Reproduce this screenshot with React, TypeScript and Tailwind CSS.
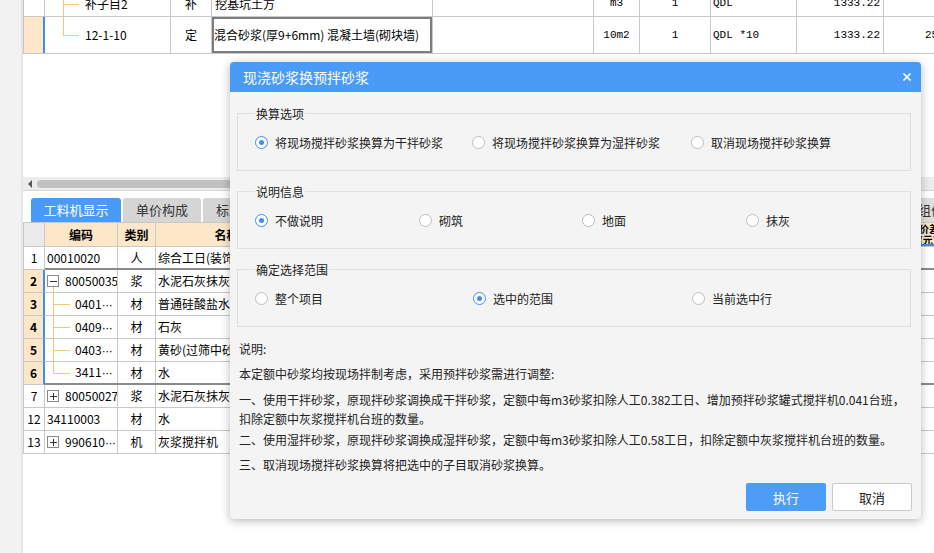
import { X } from "lucide-react";
import { FC } from "react";

const TopTable: FC = () => {
  return (
    <div className="h-[54px] overflow-hidden border-l border-[#c4c4c4]">
      <div className="-mt-[9px]">
        {/* partial row above */}
        <div className="flex h-[26px] border-b border-[#c8c8c8]">
          <div className="w-[21px] shrink-0 border-r border-[#c8c8c8]" />
          <div className="relative flex w-[126px] shrink-0 items-center border-r border-[#c8c8c8] pl-[40px]">
            <span className="absolute left-[18px] top-0 bottom-0 w-px bg-[#f6c577]" />
            <span className="absolute left-[18px] top-1/2 h-px w-[16px] bg-[#f6c577]" />
            补子目2
          </div>
          <div className="flex w-[41px] shrink-0 items-center justify-center border-r border-[#c8c8c8]">补</div>
          <div className="flex w-[221px] shrink-0 items-center border-r border-[#c8c8c8] pl-[3px]">挖基坑土方</div>
          <div className="w-[161px] shrink-0 border-r border-[#c8c8c8]" />
          <div className="flex w-[46px] shrink-0 items-center justify-center border-r border-[#c8c8c8] font-['Liberation_Mono',monospace] text-[11px]">m3</div>
          <div className="flex w-[71px] shrink-0 items-center justify-center border-r border-[#c8c8c8] font-['Liberation_Mono',monospace] text-[11px]">1</div>
          <div className="flex w-[86px] shrink-0 items-center border-r border-[#c8c8c8] pl-[2px] font-['Liberation_Mono',monospace] text-[11px]">QDL</div>
          <div className="flex w-[87px] shrink-0 items-center justify-end border-r border-[#c8c8c8] pr-[3px] font-['Liberation_Mono',monospace] text-[11px]">1333.22</div>
          <div className="flex-1" />
        </div>
        {/* current row */}
        <div className="flex h-[37px] border-b border-[#c8c8c8]">
          <div className="w-[21px] shrink-0 border-r-2 border-[#3d8ef0] bg-[#fee6c8]" />
          <div className="relative flex w-[126px] shrink-0 items-center border-r border-[#c8c8c8] pl-[40px]">
            <span className="absolute left-[18px] top-0 h-1/2 w-px bg-[#f6c577]" />
            <span className="absolute left-[18px] top-1/2 h-px w-[16px] bg-[#f6c577]" />
            12-1-10
          </div>
          <div className="flex w-[41px] shrink-0 items-center justify-center border-r border-[#c8c8c8]">定</div>
          <div className="flex w-[221px] shrink-0 items-center border-r border-[#c8c8c8] pl-[2px] shadow-[inset_0_0_0_2px_#7d7d7d]">
            混合砂浆(厚9+6mm) 混凝土墙(砌块墙)
          </div>
          <div className="w-[161px] shrink-0 border-r border-[#c8c8c8]" />
          <div className="flex w-[46px] shrink-0 items-center justify-center border-r border-[#c8c8c8] font-['Liberation_Mono',monospace] text-[11px]">10m2</div>
          <div className="flex w-[71px] shrink-0 items-center justify-center border-r border-[#c8c8c8] font-['Liberation_Mono',monospace] text-[11px]">1</div>
          <div className="flex w-[86px] shrink-0 items-center border-r border-[#c8c8c8] pl-[2px] font-['Liberation_Mono',monospace] text-[11px]">QDL *10</div>
          <div className="flex w-[87px] shrink-0 items-center justify-end border-r border-[#c8c8c8] pr-[3px] font-['Liberation_Mono',monospace] text-[11px]">1333.22</div>
          <div className="flex flex-1 items-center overflow-hidden whitespace-nowrap pl-[41px] font-['Liberation_Mono',monospace] text-[11px]">25128.35</div>
        </div>
      </div>
    </div>
  );
};

type Row = {
  n: string;
  code: string;
  more?: boolean;
  type: string;
  name: string;
  kind: "plain" | "parent" | "plus" | "child" | "lastChild";
  sel?: boolean;
  bottomDark?: boolean;
};

const rows: Row[] = [
  { n: "1", code: "00010020", type: "人", name: "综合工日(装饰)", kind: "plain", bottomDark: true },
  { n: "2", code: "80050035", type: "浆", name: "水泥石灰抹灰砂浆", kind: "parent", sel: true },
  { n: "3", code: "0401", more: true, type: "材", name: "普通硅酸盐水泥", kind: "child", sel: true },
  { n: "4", code: "0409", more: true, type: "材", name: "石灰", kind: "child", sel: true },
  { n: "5", code: "0403", more: true, type: "材", name: "黄砂(过筛中砂)", kind: "child", sel: true },
  { n: "6", code: "3411", more: true, type: "材", name: "水", kind: "lastChild", sel: true, bottomDark: true },
  { n: "7", code: "80050027", type: "浆", name: "水泥石灰抹灰砂浆", kind: "plus" },
  { n: "12", code: "34110003", type: "材", name: "水", kind: "plain" },
  { n: "13", code: "990610", more: true, type: "机", name: "灰浆搅拌机", kind: "plus" },
];

const restCols = ["w-[90px]", "w-[60px]", "w-[80px]", "w-[80px]", "w-[80px]", "w-[80px]", "w-[77px]", "w-[70px]"];
const restHeads = ["规格型号", "单位", "损耗率", "含量", "数量", "定额价", "市场价", "合价"];

const ToggleBox: FC<{ minus: boolean }> = ({ minus }) => (
  <span className="relative ml-[2px] flex h-[12px] w-[12px] shrink-0 items-center justify-center border border-[#8a8a8a] bg-white">
    <span className="absolute h-px w-[7px] bg-[#333]" />
    {!minus && <span className="absolute h-[7px] w-px bg-[#333]" />}
  </span>
);

const Code: FC<{ r: Row }> = ({ r }) => (
  <span>
    {r.code}
    {r.more && <span className="font-['Liberation_Sans',sans-serif] tracking-[-0.5px]">···</span>}
  </span>
);

const LowerTable: FC = () => {
  return (
    <div className="border-l border-t border-[#c8c8c8]">
      <div className="flex h-[24px] border-b border-[#c8c8c8] font-bold">
        <div className="w-[21px] shrink-0 border-r border-[#c8c8c8] bg-[#ebebeb]" />
        <div className="flex w-[73px] shrink-0 items-center justify-center border-r border-[#c8c8c8] bg-[#fde7c9]">编码</div>
        <div className="flex w-[38px] shrink-0 items-center justify-center border-r border-[#c8c8c8] bg-[#fde7c9]">类别</div>
        <div className="flex w-[142px] shrink-0 items-center justify-center border-r border-[#c8c8c8] bg-[#fde7c9]">名称</div>
        {restCols.map((w, i) => (
          <div key={i} className={`${w} flex shrink-0 items-center justify-center border-r border-[#c8c8c8] bg-[#fde7c9]`}>
            {restHeads[i]}
          </div>
        ))}
        <div className="flex flex-1 flex-col justify-center overflow-hidden whitespace-nowrap border-b-2 border-[#3d8ef0] bg-[#fde7c9] pl-[4px] text-[10px] leading-[11px]">
          <span>价差</span>
          <span>(元)</span>
        </div>
      </div>
      {rows.map((r) => {
        const bb = r.bottomDark ? "border-b-2 border-[#8a8a8a]" : "border-b border-[#c8c8c8]";
        return (
          <div key={r.n} className="flex h-[23px]">
            <div
              className={
                r.sel
                  ? "flex w-[21px] shrink-0 items-center justify-center border-b border-r-2 border-b-[#c8c8c8] border-r-[#3d8ef0] bg-[#fee6c8] font-bold"
                  : "flex w-[21px] shrink-0 items-center justify-center border-b border-r border-[#c8c8c8]"
              }
            >
              {r.n}
            </div>
            <div className={`flex flex-1 ${bb}`}>
              <div className="relative flex w-[73px] shrink-0 items-center overflow-hidden whitespace-nowrap border-r border-[#c8c8c8]">
                {r.kind === "plain" && (
                  <span className="pl-[2px]">
                    <Code r={r} />
                  </span>
                )}
                {(r.kind === "parent" || r.kind === "plus") && (
                  <>
                    <ToggleBox minus={r.kind === "parent"} />
                    <span className="pl-[6px]">
                      <Code r={r} />
                    </span>
                    {r.kind === "parent" && <span className="absolute left-[8px] top-[17px] bottom-0 w-px bg-[#f6c577]" />}
                  </>
                )}
                {(r.kind === "child" || r.kind === "lastChild") && (
                  <>
                    <span className={r.kind === "child" ? "absolute left-[8px] top-0 bottom-0 w-px bg-[#f6c577]" : "absolute left-[8px] top-0 h-1/2 w-px bg-[#f6c577]"} />
                    <span className="absolute left-[8px] top-1/2 h-px w-[17px] bg-[#f6c577]" />
                    <span className="pl-[30px]">
                      <Code r={r} />
                    </span>
                  </>
                )}
              </div>
              <div className="flex w-[38px] shrink-0 items-center justify-center border-r border-[#c8c8c8]">{r.type}</div>
              <div className="flex w-[142px] shrink-0 items-center overflow-hidden whitespace-nowrap border-r border-[#c8c8c8] pl-[2px]">{r.name}</div>
              {restCols.map((w, i) => (
                <div key={i} className={`${w} shrink-0 border-r border-[#c8c8c8]`} />
              ))}
              <div className="flex-1" />
            </div>
          </div>
        );
      })}
    </div>
  );
};

const tabs: { label: string; w: string }[] = [
  { label: "单价构成", w: "w-[78px]" },
  { label: "标准换算", w: "w-[78px]" },
  { label: "换算信息", w: "w-[78px]" },
  { label: "安装费用", w: "w-[78px]" },
  { label: "特征及内容", w: "w-[90px]" },
  { label: "工程量明细", w: "w-[90px]" },
  { label: "反查图形工程量", w: "w-[112px]" },
  { label: "说明信息", w: "w-[80px]" },
  { label: "图元公式", w: "w-[79px]" },
];

const Radio: FC<{ checked?: boolean; label: string; className: string }> = ({ checked, label, className }) => (
  <div className={`flex items-center ${className}`}>
    {checked ? (
      <span className="flex h-[13px] w-[13px] shrink-0 items-center justify-center rounded-full border border-[#3f8ff1] bg-white">
        <span className="h-[5px] w-[5px] rounded-full bg-[#3f8ff1]" />
      </span>
    ) : (
      <span className="h-[13px] w-[13px] shrink-0 rounded-full border border-[#bdbdbd] bg-white" />
    )}
    <span className="ml-[7px]">{label}</span>
  </div>
);

const Dialog: FC = () => {
  return (
    <div className="absolute left-[230px] top-[62px] z-10 w-[691px] overflow-hidden rounded-[4px] bg-[#f4f4f4] text-[12px] leading-[17px] text-[#222] shadow-[0_2px_10px_rgba(0,0,0,0.28)]">
      <div className="flex h-[30px] items-center justify-between bg-[#4a9bf7] pl-[13px] pr-[8px] text-[14px] text-white">
        <span>现浇砂浆换预拌砂浆</span>
        <X size={12} strokeWidth={3.5} />
      </div>
      <div className="pl-[7px] pr-[10px] pt-[13px] pb-[8px]">
        <fieldset className="border border-[#e0e0e0] px-[17px] pt-[12px] pb-[19px]">
          <legend className="px-[1px]">换算选项</legend>
          <div className="flex">
            <Radio checked label="将现场搅拌砂浆换算为干拌砂浆" className="w-[217px]" />
            <Radio label="将现场搅拌砂浆换算为湿拌砂浆" className="w-[219px]" />
            <Radio label="取消现场搅拌砂浆换算" className="flex-1" />
          </div>
        </fieldset>
        <fieldset className="mt-[12px] border border-[#e0e0e0] px-[17px] pt-[12px] pb-[19px]">
          <legend className="px-[1px]">说明信息</legend>
          <div className="flex">
            <Radio checked label="不做说明" className="w-[164px]" />
            <Radio label="砌筑" className="w-[163px]" />
            <Radio label="地面" className="w-[164px]" />
            <Radio label="抹灰" className="flex-1" />
          </div>
        </fieldset>
        <fieldset className="mt-[12px] border border-[#e0e0e0] px-[17px] pt-[12px] pb-[19px]">
          <legend className="px-[1px]">确定选择范围</legend>
          <div className="flex">
            <Radio label="整个项目" className="w-[218px]" />
            <Radio checked label="选中的范围" className="w-[219px]" />
            <Radio label="当前选中行" className="flex-1" />
          </div>
        </fieldset>
        <div className="px-[2px] leading-[19px]">
          <p className="mt-[12px]">说明:</p>
          <p className="mt-[6px]">本定额中砂浆均按现场拌制考虑，采用预拌砂浆需进行调整:</p>
          <p className="mt-[7px]">
            一、使用干拌砂浆，原现拌砂浆调换成干拌砂浆，定额中每m3砂浆扣除人工0.382工日、增加预拌砂浆罐式搅拌机0.041台班，
            <br />
            扣除定额中灰浆搅拌机台班的数量。
          </p>
          <p className="mt-[2px]">二、使用湿拌砂浆，原现拌砂浆调换成湿拌砂浆，定额中每m3砂浆扣除人工0.58工日，扣除定额中灰浆搅拌机台班的数量。</p>
          <p className="mt-[6px]">三、取消现场搅拌砂浆换算将把选中的子目取消砂浆换算。</p>
        </div>
        <div className="mt-[9px] flex justify-end gap-[6px] text-[13px]">
          <button className="h-[28px] w-[80px] rounded-[2px] bg-[#4d9df8] text-white">执行</button>
          <button className="mr-[-1px] h-[28px] w-[80px] rounded-[2px] border border-[#c9c9c9] bg-white text-[#222]">取消</button>
        </div>
      </div>
    </div>
  );
};

const App: FC = () => {
  return (
    <div className="relative flex h-[553px] w-[934px] overflow-hidden bg-white font-['Noto_Sans_CJK_SC',sans-serif] text-[12px] text-black">
      <div className="w-[23px] shrink-0 border-r-2 border-[#e6e6e6] bg-[#f2f2f2]" />
      <div className="flex min-w-0 flex-1 flex-col">
        <TopTable />
        <div className="h-[123px]" />
        <div className="flex h-[14px] items-center border-b border-[#d6d6d6] bg-[#ececec] pl-[5px]">
          <span className="h-0 w-0 border-y-[4px] border-r-[4px] border-y-transparent border-r-[#5a5a5a]" />
          <span className="ml-[5px] h-[8px] w-[880px] rounded-full bg-[#c1c1c1]" />
        </div>
        <div className="mt-[7px] flex h-[24px] gap-[2px] pl-[8px] text-[12px] whitespace-nowrap">
          <div className="flex w-[90px] shrink-0 items-center justify-center rounded-t-[3px] bg-[#4a9bf7] text-[13px] text-white">工料机显示</div>
          {tabs.map((t) => (
            <div key={t.label} className={`${t.w} flex shrink-0 items-center justify-center rounded-t-[3px] bg-[#d5d5d5] text-[13px] text-[#333]`}>
              {t.label}
            </div>
          ))}
          <div className="flex shrink-0 items-center rounded-t-[3px] bg-[#dedede] px-[14px] text-[13px] text-[#333]">组价方案</div>
        </div>
        <LowerTable />
      </div>
      <Dialog />
    </div>
  );
};

export default App;
